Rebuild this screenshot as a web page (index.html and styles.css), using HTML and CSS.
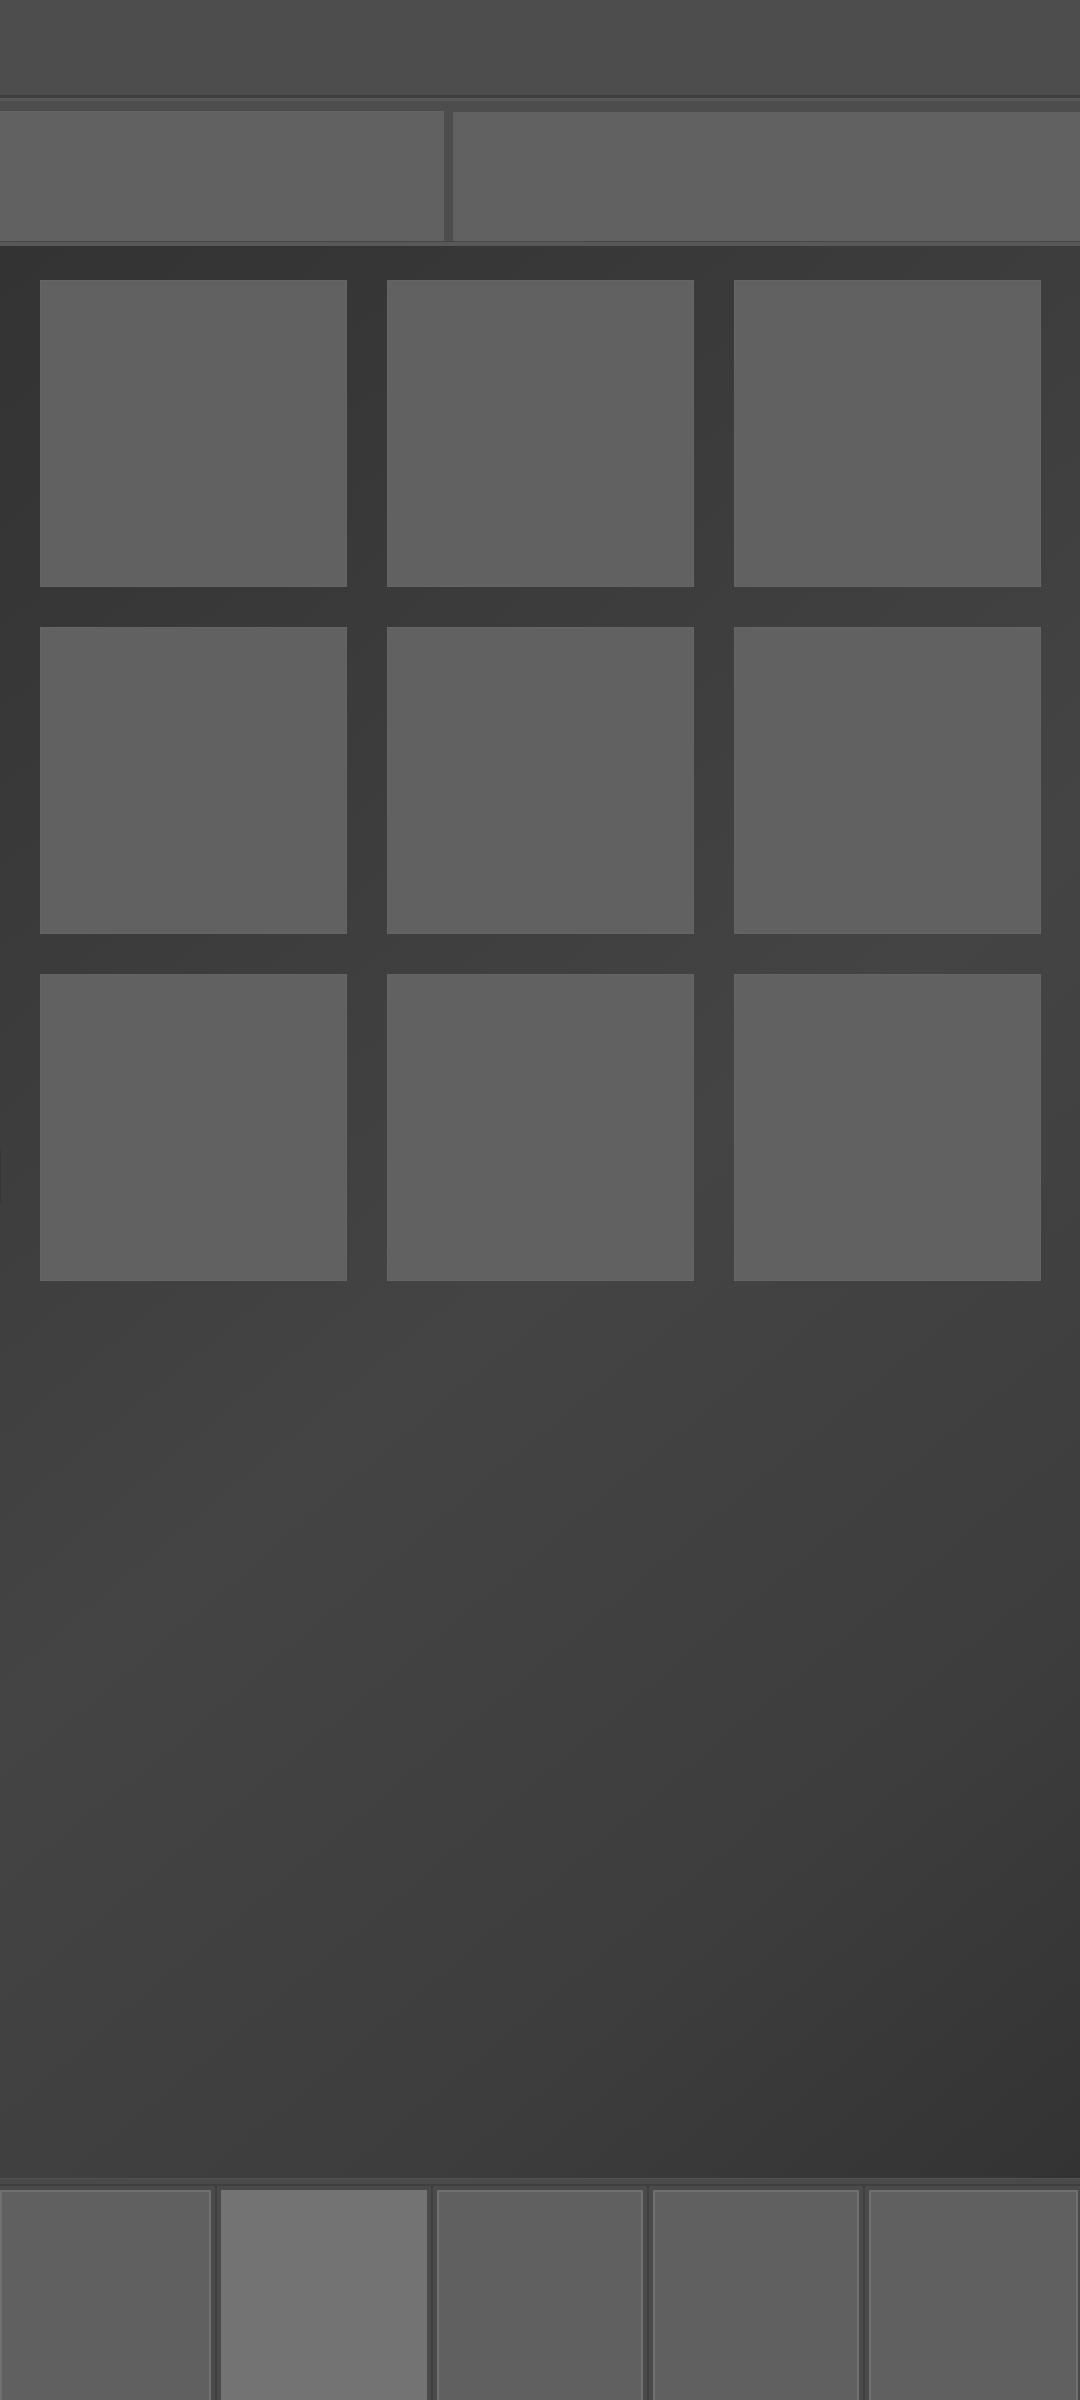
FILE: index.html
```html
<!DOCTYPE html>
<html lang="en">
<head>
<meta charset="utf-8">
<title>Grid</title>
<link rel="stylesheet" href="styles.css">
</head>
<body>
<div class="app">
  <header class="topbar"></header>
  <div class="tabbar">
    <div class="tabbar-inner">
      <div class="tabs">
        <div class="tab tab-first"></div>
        <div class="tab tab-second"></div>
      </div>
    </div>
  </div>
  <main class="content">
    <span class="edge-handle"></span>
    <div class="grid">
      <div class="tile"></div>
      <div class="tile"></div>
      <div class="tile"></div>
      <div class="tile"></div>
      <div class="tile"></div>
      <div class="tile"></div>
      <div class="tile"></div>
      <div class="tile"></div>
      <div class="tile"></div>
    </div>
  </main>
  <nav class="navbar">
    <div class="navbar-inner">
      <div class="nav-cell nav-cell-first"><div class="nav-item"></div></div>
      <div class="nav-cell"><div class="nav-item nav-item-active"></div></div>
      <div class="nav-cell"><div class="nav-item"></div></div>
      <div class="nav-cell"><div class="nav-item"></div></div>
      <div class="nav-cell nav-cell-last"><div class="nav-item"></div></div>
    </div>
  </nav>
</div>
</body>
</html>
```

FILE: styles.css
```css
* {
  box-sizing: border-box;
}

html, body {
  margin: 0;
  padding: 0;
  width: 1080px;
  height: 2400px;
  overflow: hidden;
  background: #3a3a3a;
  font-family: "Roboto", "Liberation Sans", sans-serif;
}

.app {
  width: 1080px;
  height: 2400px;
  display: flex;
  flex-direction: column;
}

.topbar {
  height: 95px;
  flex: none;
  background: #4d4d4d;
}

.tabbar {
  flex: none;
  border-top: 3px solid #3e3e3e;
  border-bottom: 1px solid #474747;
  background: #4d4d4d;
}

.tabbar-inner {
  border-top: 3px solid #595959;
  padding-top: 10px;
}

.tabs {
  display: grid;
  grid-template-columns: 444px 1fr;
  column-gap: 9px;
  height: 130px;
}

.tab {
  background: #616161;
}

.tab-first {
  border-top: 1px solid #646464;
}

.tab-second {
  border-top: 1px solid #4f4f4f;
}

.content {
  position: relative;
  flex: 1;
  border-top: 4px solid #585858;
  padding: 34px 39px 0 40px;
  background: linear-gradient(140deg, #333333 0%, #363636 12%, #444444 52%, #3d3d3d 80%, #333333 100%);
}

.edge-handle {
  position: absolute;
  left: 0;
  top: 904px;
  width: 1px;
  height: 52px;
  background: #353535;
}

.grid {
  display: grid;
  grid-template-columns: repeat(3, 1fr);
  gap: 40px;
}

.tile {
  aspect-ratio: 1 / 1;
  background: #616161;
  border: 1px solid #656565;
}

.navbar {
  flex: none;
  height: 222px;
  border-top: 1px solid #525252;
  background: #4a4a4a;
  padding-top: 5px;
}

.navbar-inner {
  display: grid;
  grid-template-columns: repeat(5, 1fr);
  height: 100%;
  border-top: 2px solid #3f3f3f;
}

.nav-cell {
  background: #4a4a4a;
  border-left: 1px solid #3f3f3f;
  border-right: 1px solid #3f3f3f;
  padding: 4px 4px 0 4px;
}

.nav-cell-first {
  border-left: 0;
  padding-left: 0;
}

.nav-cell-last {
  border-right: 0;
  padding-right: 2px;
}

.nav-item {
  height: 230px;
  background: #606060;
  border: 2px solid #6f6f6f;
  border-bottom: 0;
}

.nav-item-active {
  background: #737373;
  border-color: #737373;
}
```
